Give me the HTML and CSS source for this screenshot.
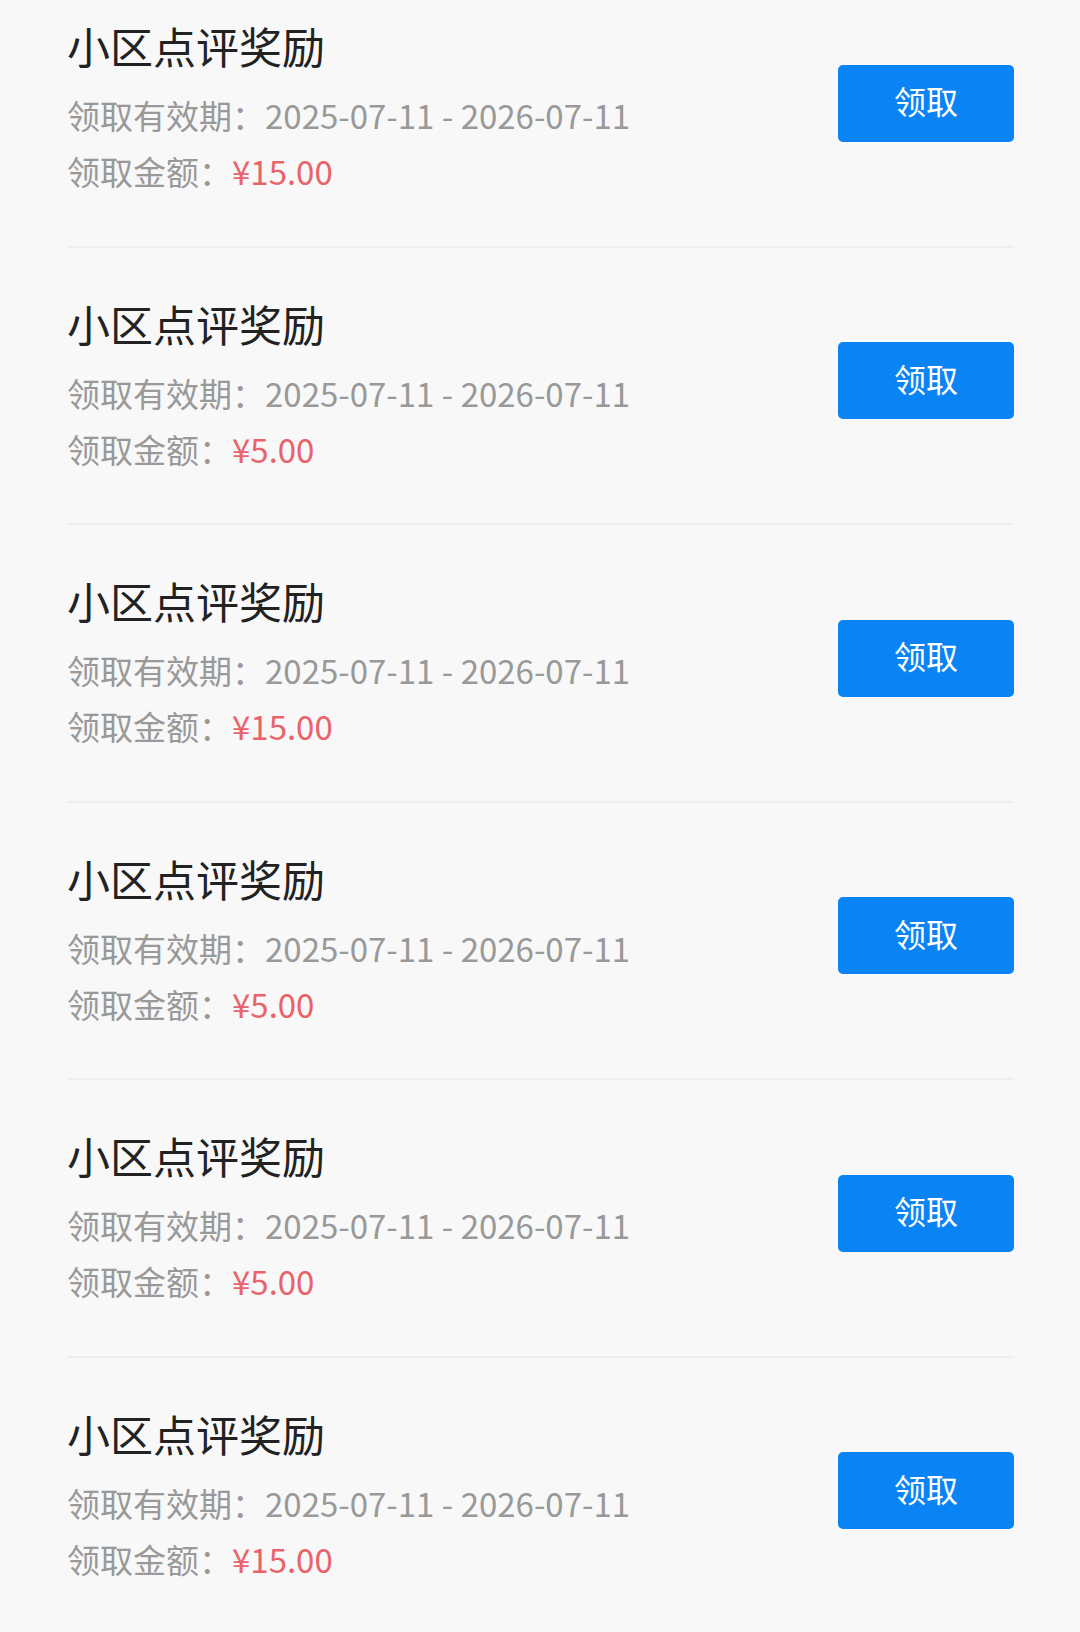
FILE: index.html
```html
<!DOCTYPE html>
<html lang="zh-CN">
<head>
    <meta charset="UTF-8">
    <meta name="viewport" content="width=device-width, initial-scale=1.0">
    <title>小区点评奖励</title>
    <link rel="stylesheet" href="styles.css">
</head>
<body>
    <ul class="reward-list">
        <li class="reward">
            <div class="reward-info">
                <div class="reward-title">小区点评奖励</div>
                <div class="reward-line">领取有效期：2025-07-11 - 2026-07-11</div>
                <div class="reward-line">领取金额：<span class="amount">¥15.00</span></div>
            </div>
            <button class="claim-btn">领取</button>
        </li>
        <li class="reward">
            <div class="reward-info">
                <div class="reward-title">小区点评奖励</div>
                <div class="reward-line">领取有效期：2025-07-11 - 2026-07-11</div>
                <div class="reward-line">领取金额：<span class="amount">¥5.00</span></div>
            </div>
            <button class="claim-btn">领取</button>
        </li>
        <li class="reward">
            <div class="reward-info">
                <div class="reward-title">小区点评奖励</div>
                <div class="reward-line">领取有效期：2025-07-11 - 2026-07-11</div>
                <div class="reward-line">领取金额：<span class="amount">¥15.00</span></div>
            </div>
            <button class="claim-btn">领取</button>
        </li>
        <li class="reward">
            <div class="reward-info">
                <div class="reward-title">小区点评奖励</div>
                <div class="reward-line">领取有效期：2025-07-11 - 2026-07-11</div>
                <div class="reward-line">领取金额：<span class="amount">¥5.00</span></div>
            </div>
            <button class="claim-btn">领取</button>
        </li>
        <li class="reward">
            <div class="reward-info">
                <div class="reward-title">小区点评奖励</div>
                <div class="reward-line">领取有效期：2025-07-11 - 2026-07-11</div>
                <div class="reward-line">领取金额：<span class="amount">¥5.00</span></div>
            </div>
            <button class="claim-btn">领取</button>
        </li>
        <li class="reward">
            <div class="reward-info">
                <div class="reward-title">小区点评奖励</div>
                <div class="reward-line">领取有效期：2025-07-11 - 2026-07-11</div>
                <div class="reward-line">领取金额：<span class="amount">¥15.00</span></div>
            </div>
            <button class="claim-btn">领取</button>
        </li>
    </ul>
</body>
</html>
```

FILE: styles.css
```css
html, body {
    margin: 0;
    padding: 0;
    background-color: #f8f8f8;
    font-family: "Noto Sans CJK SC", "Noto Sans", sans-serif;
    overflow: hidden;
}
.reward-list {
    list-style: none;
    margin: -30px 0 0 0;
    padding: 0 66px 0 67px;
}
.reward {
    display: flex;
    align-items: center;
    justify-content: space-between;
    padding: 45px 0 46.6px 0;
    border-bottom: 2px solid #eeeeee;
}
.reward-title {
    font-size: 43px;
    line-height: 60px;
    color: #222222;
    margin-bottom: 12px;
}
.reward-line {
    font-size: 33px;
    line-height: 56px;
    color: #999999;
    white-space: nowrap;
}
.amount {
    color: #e8636a;
}
.claim-btn {
    width: 176px;
    height: 77px;
    margin-bottom: 8px;
    border: none;
    border-radius: 5px;
    background-color: #0a84f5;
    color: #ffffff;
    font-family: inherit;
    font-size: 32px;
    padding: 0 0 6px 0;
}
```
